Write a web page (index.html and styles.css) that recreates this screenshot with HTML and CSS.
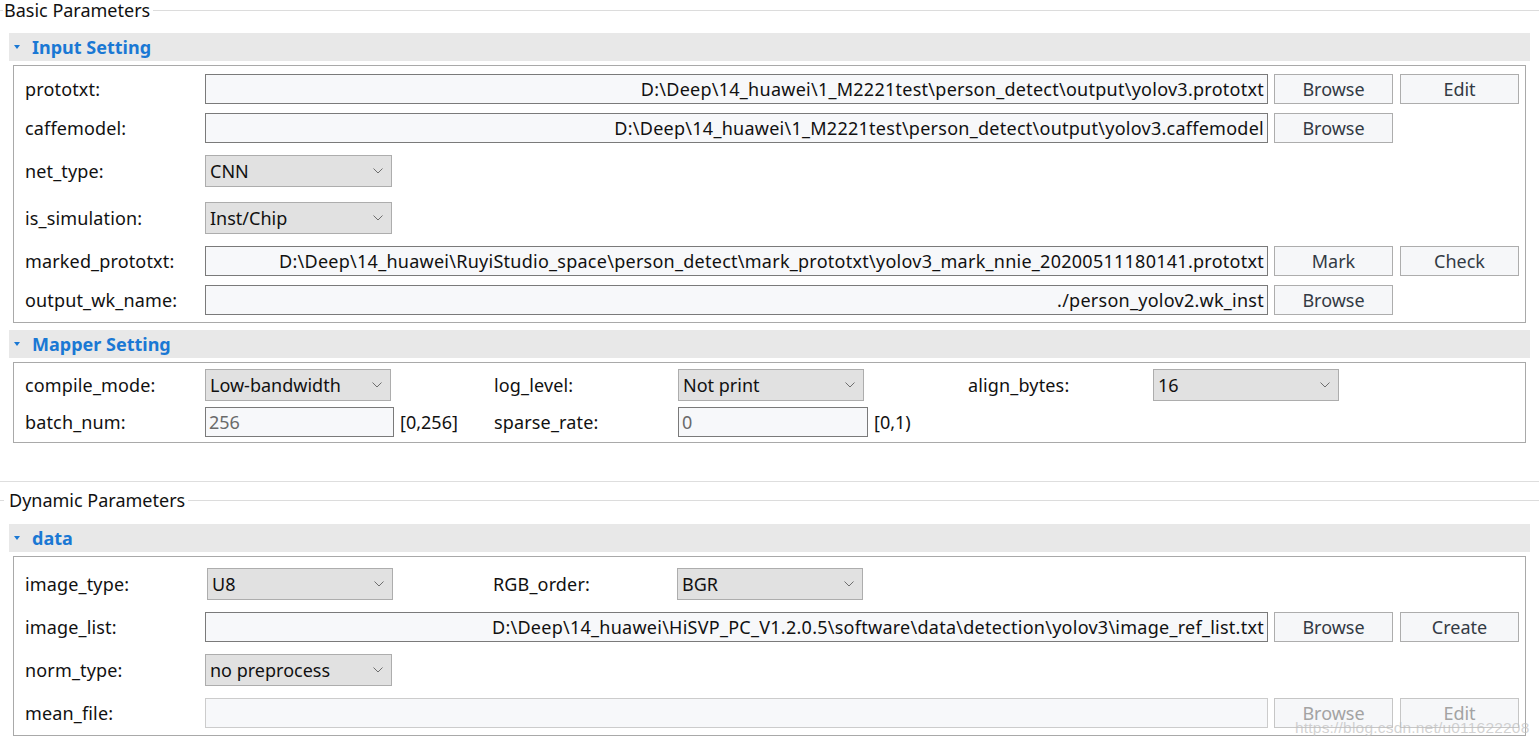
FILE: index.html
```html
<!DOCTYPE html>
<html>
<head>
<meta charset="utf-8">
<title>Parameters</title>
<link rel="stylesheet" href="styles.css">
</head>
<body>
<div class="page">
  <div class="group basic">
    <div class="group-title"><span class="tick t-basic"></span><span class="gt-text">Basic Parameters</span><span class="gt-line"></span></div>

    <div class="section s-input">
      <div class="sec-head"><span class="tri"></span><span class="sec-title">Input Setting</span></div>
      <div class="sec-body b-input">
        <div class="row r1">
          <span class="lbl">prototxt:</span>
          <div class="field"><span>D:\Deep\14_huawei\1_M2221test\person_detect\output\yolov3.prototxt</span></div>
          <span class="btn">Browse</span>
          <span class="btn">Edit</span>
        </div>
        <div class="row r2">
          <span class="lbl">caffemodel:</span>
          <div class="field"><span>D:\Deep\14_huawei\1_M2221test\person_detect\output\yolov3.caffemodel</span></div>
          <span class="btn">Browse</span>
          <span class="btn-slot"></span>
        </div>
        <div class="row r3">
          <span class="lbl">net_type:</span>
          <div class="select w186"><span>CNN</span><svg class="chev" viewBox="0 0 10 6"><path d="M0.5 0.5 L5 5 L9.5 0.5"/></svg></div>
        </div>
        <div class="row r4">
          <span class="lbl">is_simulation:</span>
          <div class="select w186"><span>Inst/Chip</span><svg class="chev" viewBox="0 0 10 6"><path d="M0.5 0.5 L5 5 L9.5 0.5"/></svg></div>
        </div>
        <div class="row r5">
          <span class="lbl">marked_prototxt:</span>
          <div class="field"><span>D:\Deep\14_huawei\RuyiStudio_space\person_detect\mark_prototxt\yolov3_mark_nnie_20200511180141.prototxt</span></div>
          <span class="btn">Mark</span>
          <span class="btn">Check</span>
        </div>
        <div class="row r6">
          <span class="lbl">output_wk_name:</span>
          <div class="field"><span>./person_yolov2.wk_inst</span></div>
          <span class="btn">Browse</span>
          <span class="btn-slot"></span>
        </div>
      </div>
    </div>

    <div class="section s-mapper">
      <div class="sec-head"><span class="tri"></span><span class="sec-title">Mapper Setting</span></div>
      <div class="sec-body b-mapper">
        <div class="grid3">
          <span class="lbl">compile_mode:</span>
          <div class="cell"><div class="select w185"><span>Low-bandwidth</span><svg class="chev" viewBox="0 0 10 6"><path d="M0.5 0.5 L5 5 L9.5 0.5"/></svg></div></div>
          <span class="lbl">log_level:</span>
          <div class="cell"><div class="select w185"><span>Not print</span><svg class="chev" viewBox="0 0 10 6"><path d="M0.5 0.5 L5 5 L9.5 0.5"/></svg></div></div>
          <span class="lbl">align_bytes:</span>
          <div class="cell"><div class="select w185"><span>16</span><svg class="chev" viewBox="0 0 10 6"><path d="M0.5 0.5 L5 5 L9.5 0.5"/></svg></div></div>

          <span class="lbl">batch_num:</span>
          <div class="cell"><div class="num w189">256</div><span class="suffix">[0,256]</span></div>
          <span class="lbl">sparse_rate:</span>
          <div class="cell"><div class="num w190">0</div><span class="suffix">[0,1)</span></div>
          <span></span>
          <span></span>
        </div>
      </div>
    </div>
  </div>

  <div class="group dynamic">
    <div class="group-title"><span class="tick t-dyn"></span><span class="gt-text">Dynamic Parameters</span><span class="gt-line"></span></div>

    <div class="section s-data">
      <div class="sec-head"><span class="tri"></span><span class="sec-title">data</span></div>
      <div class="sec-body b-data">
        <div class="row d1">
          <span class="lbl">image_type:</span>
          <div class="cell2"><div class="select w185 ml2"><span>U8</span><svg class="chev" viewBox="0 0 10 6"><path d="M0.5 0.5 L5 5 L9.5 0.5"/></svg></div></div>
          <span class="lbl lbl2">RGB_order:</span>
          <div class="select w185"><span>BGR</span><svg class="chev" viewBox="0 0 10 6"><path d="M0.5 0.5 L5 5 L9.5 0.5"/></svg></div>
        </div>
        <div class="row d2">
          <span class="lbl">image_list:</span>
          <div class="field"><span>D:\Deep\14_huawei\HiSVP_PC_V1.2.0.5\software\data\detection\yolov3\image_ref_list.txt</span></div>
          <span class="btn">Browse</span>
          <span class="btn">Create</span>
        </div>
        <div class="row d3">
          <span class="lbl">norm_type:</span>
          <div class="select w186"><span>no preprocess</span><svg class="chev" viewBox="0 0 10 6"><path d="M0.5 0.5 L5 5 L9.5 0.5"/></svg></div>
        </div>
        <div class="row d4">
          <span class="lbl">mean_file:</span>
          <div class="field disabled"><span></span></div>
          <span class="btn disabled">Browse</span>
          <span class="btn disabled">Edit</span>
        </div>
      </div>
    </div>
  </div>

  <div class="watermark">https://blog.csdn.net/u011622208</div>
</div>
</body>
</html>
```

FILE: styles.css
```css
* { box-sizing: border-box; }

html, body {
  margin: 0;
  padding: 0;
  background: #ffffff;
}

body {
  font-family: "Noto Sans", "Open Sans", sans-serif;
  font-size: 18px;
  color: #111;
  width: 1539px;
  height: 746px;
  overflow: hidden;
}

.page {
  position: relative;
  width: 1539px;
  height: 746px;
}

/* group box */
.group-title {
  display: flex;
  align-items: center;
  height: 20px;
  line-height: 20px;
}
.tick {
  display: block;
  height: 1px;
  background: #dcdcdc;
}
.t-basic { width: 3px; margin-right: 1px; }
.t-dyn { width: 4px; margin-right: 5px; }
.gt-text {
  color: #111;
  font-size: 18px;
  padding-right: 3px;
}
.gt-line {
  flex: 1;
  height: 1px;
  background: #dcdcdc;
}

.basic {
  border-bottom: 1px solid #dedede;
  height: 482px;
}
.dynamic .group-title { margin-top: 8px; }

/* collapsible section */
.section {
  margin: 0 9px;
}
.s-input { margin-top: 13px; }
.s-mapper { margin-top: 7px; }
.s-data { margin-top: 14px; }

.sec-head {
  height: 28px;
  background: #e8e8e8;
  display: flex;
  align-items: center;
}
.tri {
  width: 0;
  height: 0;
  border-left: 3.5px solid transparent;
  border-right: 3.5px solid transparent;
  border-top: 4px solid #1a78d4;
  margin-left: 5px;
  margin-right: 12px;
}
.sec-title {
  color: #1a78d4;
  font-weight: bold;
  font-size: 18px;
  line-height: 28px;
}

.sec-body {
  margin: 4px 4px 0 4px;
  border: 1px solid #a9a9a9;
  padding-left: 11px;
  padding-right: 6px;
}
.b-input { padding-top: 8px; padding-bottom: 7px; }
.b-mapper { padding-top: 6px; padding-bottom: 5px; }
.b-data { padding-top: 11px; padding-bottom: 7px; }

/* rows */
.row {
  display: flex;
  align-items: center;
}
.r2 { margin-top: 9px; }
.r3 { margin-top: 12px; }
.r4 { margin-top: 15px; }
.r5 { margin-top: 12px; }
.r6 { margin-top: 9px; }
.d2, .d3, .d4 { margin-top: 12px; }

.lbl {
  width: 180px;
  flex: none;
  font-size: 18px;
  color: #111;
  white-space: nowrap;
  letter-spacing: 0.15px;
}

.field {
  flex: 1;
  height: 30px;
  min-width: 0;
  border: 1px solid #7a7a7a;
  background: #f7f8fa;
  display: flex;
  align-items: center;
  justify-content: flex-end;
  overflow: hidden;
  padding-right: 3px;
  white-space: nowrap;
  font-size: 18px;
  letter-spacing: 0.26px;
  color: #111;
}
.field.disabled {
  border-color: #cccccc;
}

.btn {
  flex: none;
  width: 119px;
  height: 30px;
  margin-left: 6px;
  border: 1px solid #adadad;
  background: #f6f7f9;
  color: #333a44;
  font-size: 18px;
  display: flex;
  align-items: center;
  justify-content: center;
}
.btn + .btn, .btn + .btn-slot { margin-left: 7px; }
.btn-slot {
  flex: none;
  width: 119px;
  height: 30px;
}
.btn.disabled {
  color: #a3a3a3;
  border-color: #c6c6c6;
}

.select {
  flex: none;
  height: 32px;
  border: 1px solid #adadad;
  background: #e1e1e1;
  display: flex;
  align-items: center;
  justify-content: space-between;
  padding-left: 4px;
  padding-right: 8px;
  font-size: 18px;
  color: #111;
}
.w186 { width: 187px; }
.w185 { width: 186px; }
.ml2 { margin-left: 2px; }
.chev {
  width: 10px;
  height: 6px;
  fill: none;
  stroke: #6e6e6e;
  stroke-width: 1;
}

/* mapper grid */
.grid3 {
  display: grid;
  grid-template-columns: 180px 289px 184px 290px 185px 1fr;
  grid-template-rows: 32px 30px;
  row-gap: 6px;
  align-items: center;
}
.cell {
  display: flex;
  align-items: center;
}
.num {
  height: 30px;
  border: 1px solid #7a7a7a;
  background: #f7f8fa;
  display: flex;
  align-items: center;
  padding-left: 3px;
  color: #6a6a6a;
  font-size: 18px;
}
.w189 { width: 189px; }
.w190 { width: 190px; }
.suffix {
  margin-left: 6px;
  font-size: 18px;
  color: #111;
}

/* data row 1 */
.cell2 {
  width: 288px;
  flex: none;
}
.lbl2 { width: 184px; }

.watermark {
  position: absolute;
  left: 1295px;
  top: 719px;
  font-family: "Liberation Sans", Arial, sans-serif;
  font-size: 15.5px;
  letter-spacing: 0.2px;
  color: rgba(190, 190, 190, 0.7);
  white-space: nowrap;
  pointer-events: none;
}
```
